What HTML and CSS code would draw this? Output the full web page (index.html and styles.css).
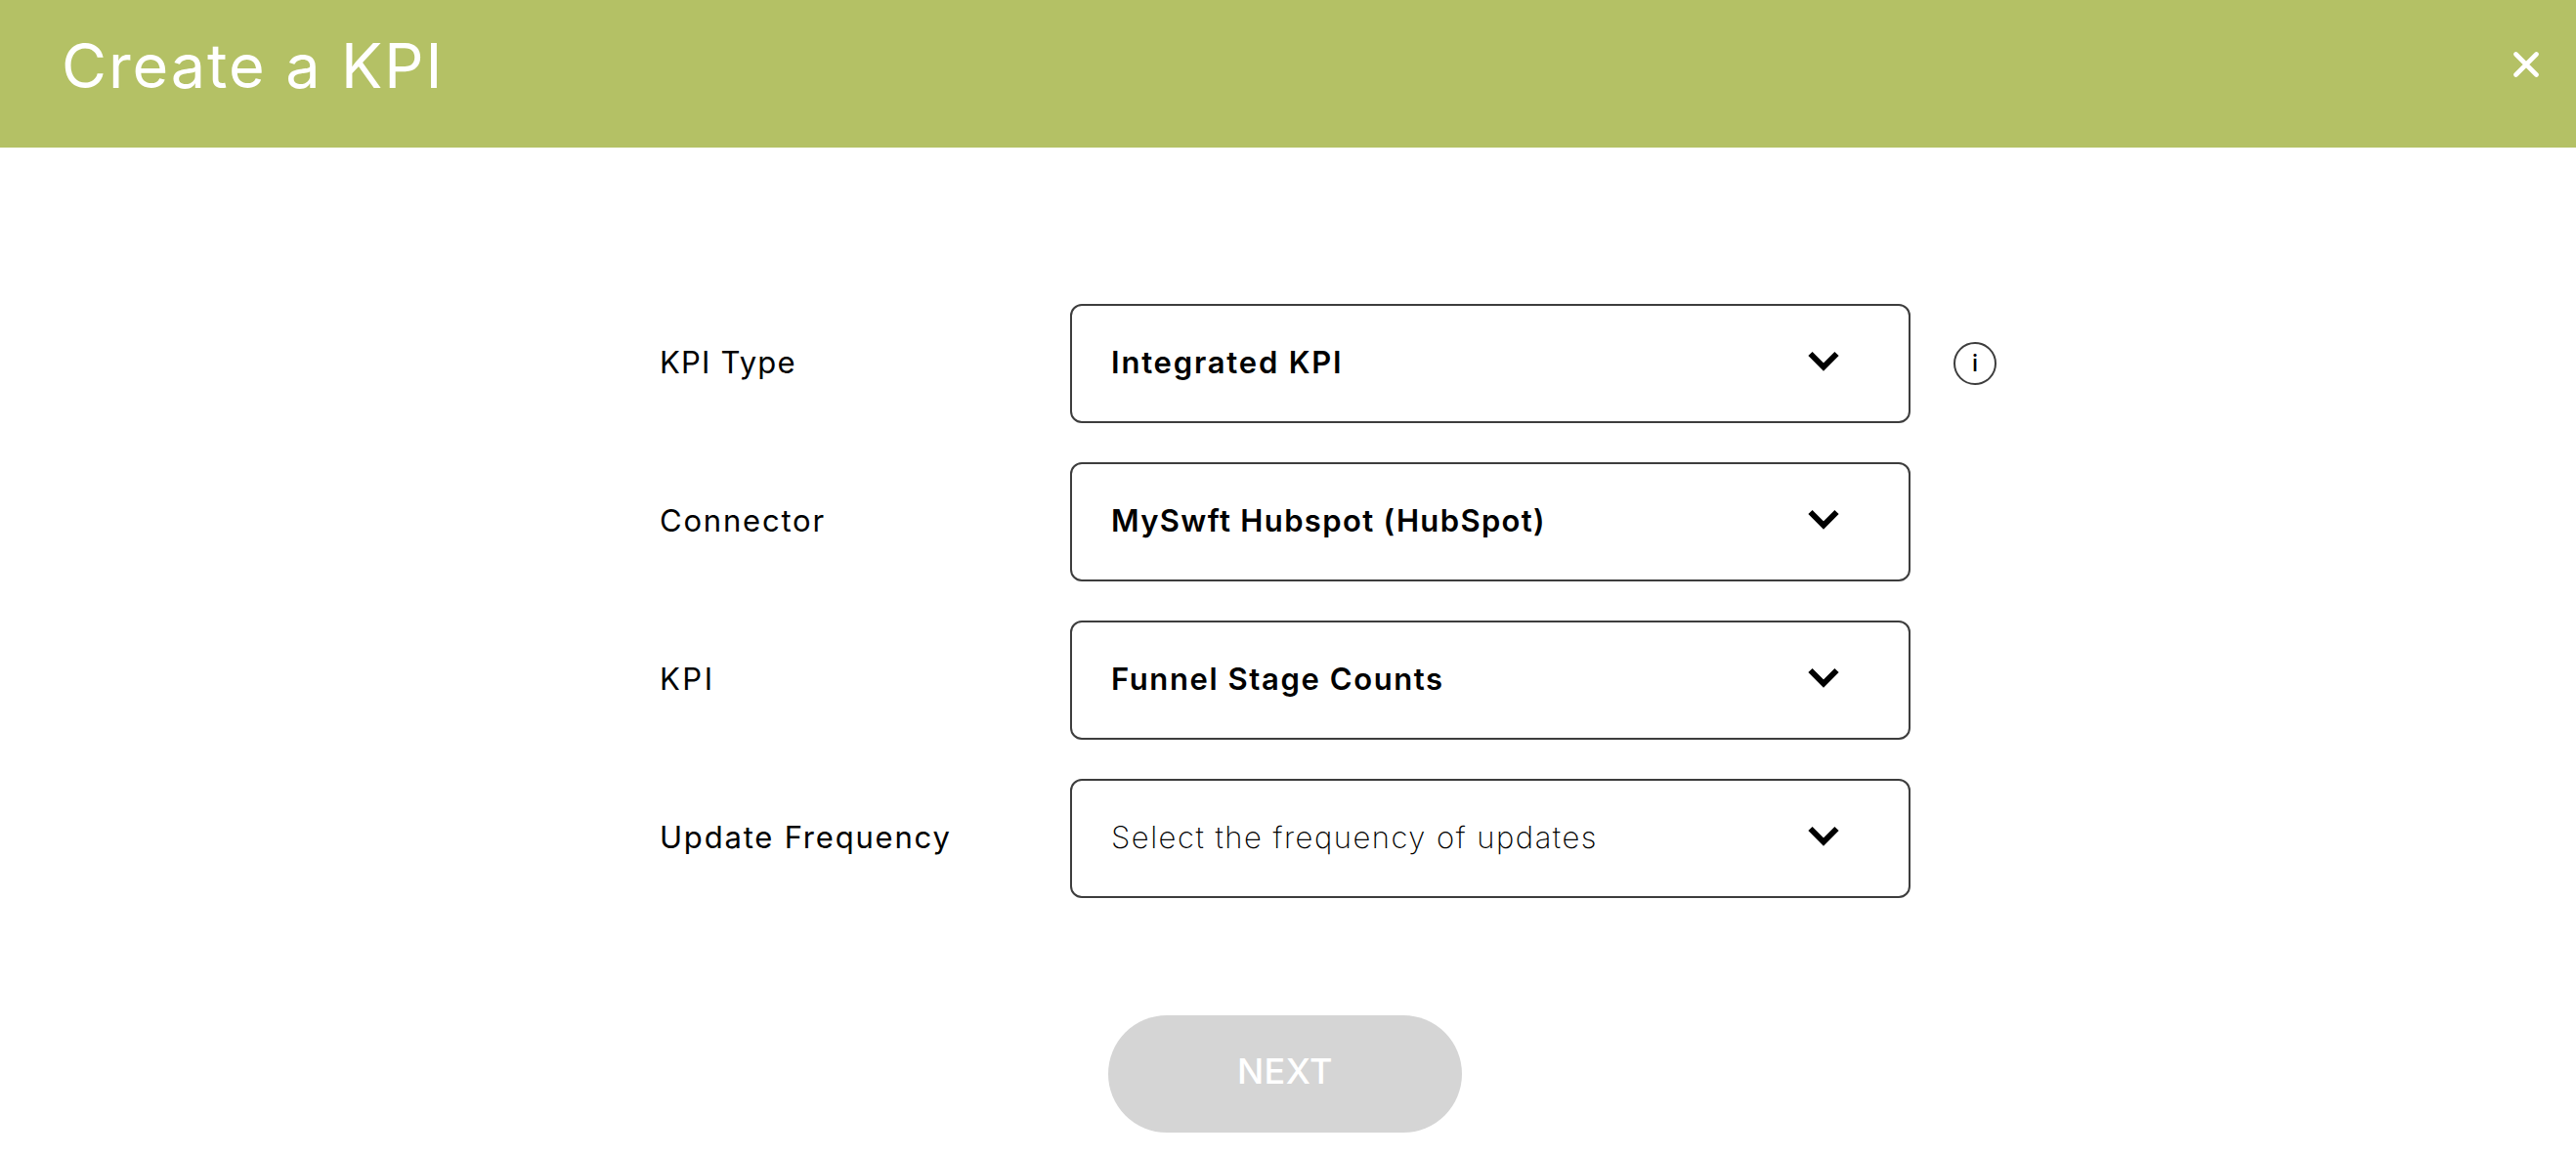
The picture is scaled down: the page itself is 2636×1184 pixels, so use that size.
FILE: index.html
```html
<!DOCTYPE html>
<html lang="en">
<head>
  <meta charset="UTF-8">
  <meta name="viewport" content="width=device-width, initial-scale=1.0">
  <title>Create a KPI</title>
  <link rel="stylesheet" href="styles.css">
</head>
<body>
  <header class="header">
    <h1 class="title">Create a KPI</h1>
    <button class="close" aria-label="Close">
      <svg width="26" height="26" viewBox="0 0 26 26">
        <path d="M2.5 2.5L23.5 23.5M23.5 2.5L2.5 23.5" fill="none" stroke="#fff" stroke-width="4.6" stroke-linecap="round"/>
      </svg>
    </button>
  </header>

  <main class="form">
    <div class="row">
      <span class="label label-type">KPI Type</span>
      <button class="select">
        <span class="value value-type">Integrated KPI</span>
        <svg class="chevron" width="32" height="22" viewBox="0 0 32 22">
          <path d="M2.5 3L16 16.5L29.5 3" fill="none" stroke="#000" stroke-width="6"/>
        </svg>
      </button>
      <span class="info">i</span>
    </div>
    <div class="row">
      <span class="label">Connector</span>
      <button class="select">
        <span class="value value-connector">MySwft Hubspot (HubSpot)</span>
        <svg class="chevron" width="32" height="22" viewBox="0 0 32 22">
          <path d="M2.5 3L16 16.5L29.5 3" fill="none" stroke="#000" stroke-width="6"/>
        </svg>
      </button>
    </div>
    <div class="row">
      <span class="label label-kpi">KPI</span>
      <button class="select">
        <span class="value">Funnel Stage Counts</span>
        <svg class="chevron" width="32" height="22" viewBox="0 0 32 22">
          <path d="M2.5 3L16 16.5L29.5 3" fill="none" stroke="#000" stroke-width="6"/>
        </svg>
      </button>
    </div>
    <div class="row">
      <span class="label">Update Frequency</span>
      <button class="select">
        <span class="value placeholder">Select the frequency of updates</span>
        <svg class="chevron" width="32" height="22" viewBox="0 0 32 22">
          <path d="M2.5 3L16 16.5L29.5 3" fill="none" stroke="#000" stroke-width="6"/>
        </svg>
      </button>
    </div>
    <button class="next" disabled>NEXT</button>
  </main>
</body>
</html>
```
FILE: styles.css
```css
* {
  box-sizing: border-box;
}

body {
  margin: 0;
  font-family: Inter, "Liberation Sans", sans-serif;
  background-color: #fff;
  color: #000;
}

button {
  font-family: inherit;
  color: inherit;
  border: none;
  padding: 0;
  cursor: pointer;
}

.header {
  display: flex;
  justify-content: space-between;
  align-items: center;
  height: 151px;
  padding: 0 38px 18px 63px;
  background-color: #b4c165;
}

.title {
  margin: 0;
  font-size: 63px;
  font-weight: 400;
  line-height: 76px;
  letter-spacing: 1.9px;
  color: #fff;
}

.close {
  display: flex;
  margin-bottom: 2px;
  background: none;
}

.form {
  padding: 160px 0 0 675px;
}

.row {
  display: flex;
  align-items: center;
  height: 122px;
  margin-bottom: 40px;
}

.label {
  width: 420px;
  padding-bottom: 3px;
  font-size: 31px;
  letter-spacing: 1.8px;
}

.label-type {
  letter-spacing: 1.2px;
}

.label-kpi {
  letter-spacing: 2.5px;
}

.select {
  display: flex;
  justify-content: space-between;
  align-items: center;
  width: 860px;
  height: 122px;
  padding: 0 71px 0 40px;
  border: 2px solid #3d3d3d;
  border-radius: 12px;
  background-color: #fff;
}

.value {
  padding-bottom: 3px;
  font-size: 31px;
  font-weight: 600;
  letter-spacing: 1.6px;
}

.value-type {
  letter-spacing: 1.8px;
}

.value-connector {
  letter-spacing: 1.35px;
}

.placeholder {
  font-weight: 200;
  letter-spacing: 1.5px;
}

.chevron {
  margin-bottom: 5px;
}

.info {
  display: flex;
  justify-content: center;
  align-items: center;
  width: 44px;
  height: 44px;
  margin: 0 0 1px 44px;
  border: 2px solid #3d3d3d;
  border-radius: 50%;
  font-size: 24px;
  font-weight: 500;
}

.next {
  display: block;
  width: 362px;
  height: 120px;
  margin: 120px 0 0 459px;
  padding-bottom: 6px;
  border-radius: 60px;
  background-color: #d5d5d5;
  color: #fff;
  font-size: 36px;
  font-weight: 500;
  letter-spacing: 0.5px;
}
```
